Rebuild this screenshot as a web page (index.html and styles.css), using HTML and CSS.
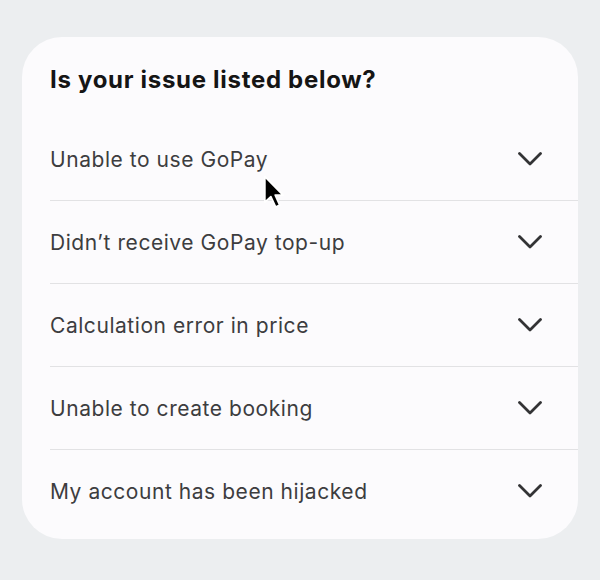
FILE: index.html
```html
<!DOCTYPE html>
<html lang="en">
<head>
    <meta charset="UTF-8">
    <meta name="viewport" content="width=device-width, initial-scale=1.0">
    <title>Help - Common issues</title>
    <link rel="stylesheet" href="styles.css">
</head>
<body>

    <div class="card">
        <h1 class="title">Is your issue listed below?</h1>
        <ul class="issues">
            <li class="issue">
                <span>Unable to use GoPay</span>
                <svg class="chevron" viewBox="0 0 24 14"><path d="M1.5 1.5l10.5 10.5 10.5-10.5"/></svg>
            </li>
            <li class="issue">
                <span>Didn’t receive GoPay top-up</span>
                <svg class="chevron" viewBox="0 0 24 14"><path d="M1.5 1.5l10.5 10.5 10.5-10.5"/></svg>
            </li>
            <li class="issue">
                <span>Calculation error in price</span>
                <svg class="chevron" viewBox="0 0 24 14"><path d="M1.5 1.5l10.5 10.5 10.5-10.5"/></svg>
            </li>
            <li class="issue">
                <span>Unable to create booking</span>
                <svg class="chevron" viewBox="0 0 24 14"><path d="M1.5 1.5l10.5 10.5 10.5-10.5"/></svg>
            </li>
            <li class="issue">
                <span>My account has been hijacked</span>
                <svg class="chevron" viewBox="0 0 24 14"><path d="M1.5 1.5l10.5 10.5 10.5-10.5"/></svg>
            </li>
        </ul>

        <!-- mouse pointer hovering the first row -->
        <svg class="pointer" viewBox="0 0 20 30">
            <path d="M1.5 1.5V24l5.3-5 4.2 9.2 3.6-1.6-4-8.9H17.5z" fill="#000" stroke="#fff" stroke-width="1.5" stroke-linejoin="round"/>
        </svg>
    </div>

</body>
</html>
```

FILE: styles.css
```css
body {
    font-family: Inter, "Noto Sans", sans-serif;
    margin: 0;
    padding: 37px 22px 0;
    background-color: #eceef0;
}
.card {
    position: relative;
    background-color: #fcfbfd;
    border-radius: 40px;
    padding: 28px 0 6px 28px;
    height: 468px;
}
.title {
    margin: 0 0 23px;
    font-size: 24px;
    line-height: 30px;
    font-weight: 700;
    color: #151515;
    letter-spacing: 0.7px;
}
.issues {
    list-style: none;
    margin: 0;
    padding: 0;
}
.issue {
    display: flex;
    align-items: center;
    justify-content: space-between;
    height: 82px;
    padding-right: 36px;
    font-size: 21px;
    letter-spacing: 0.55px;
    color: #3d3d3f;
    border-bottom: 1px solid #e2e2e4;
}
.issue:last-child {
    border-bottom: none;
}
.chevron {
    width: 24px;
    height: 14px;
    fill: none;
    stroke: #333335;
    stroke-width: 2.8;
    stroke-linecap: round;
    stroke-linejoin: round;
}
.pointer {
    position: absolute;
    left: 241px;
    top: 138px;
    width: 23px;
    height: 34px;
}
```
